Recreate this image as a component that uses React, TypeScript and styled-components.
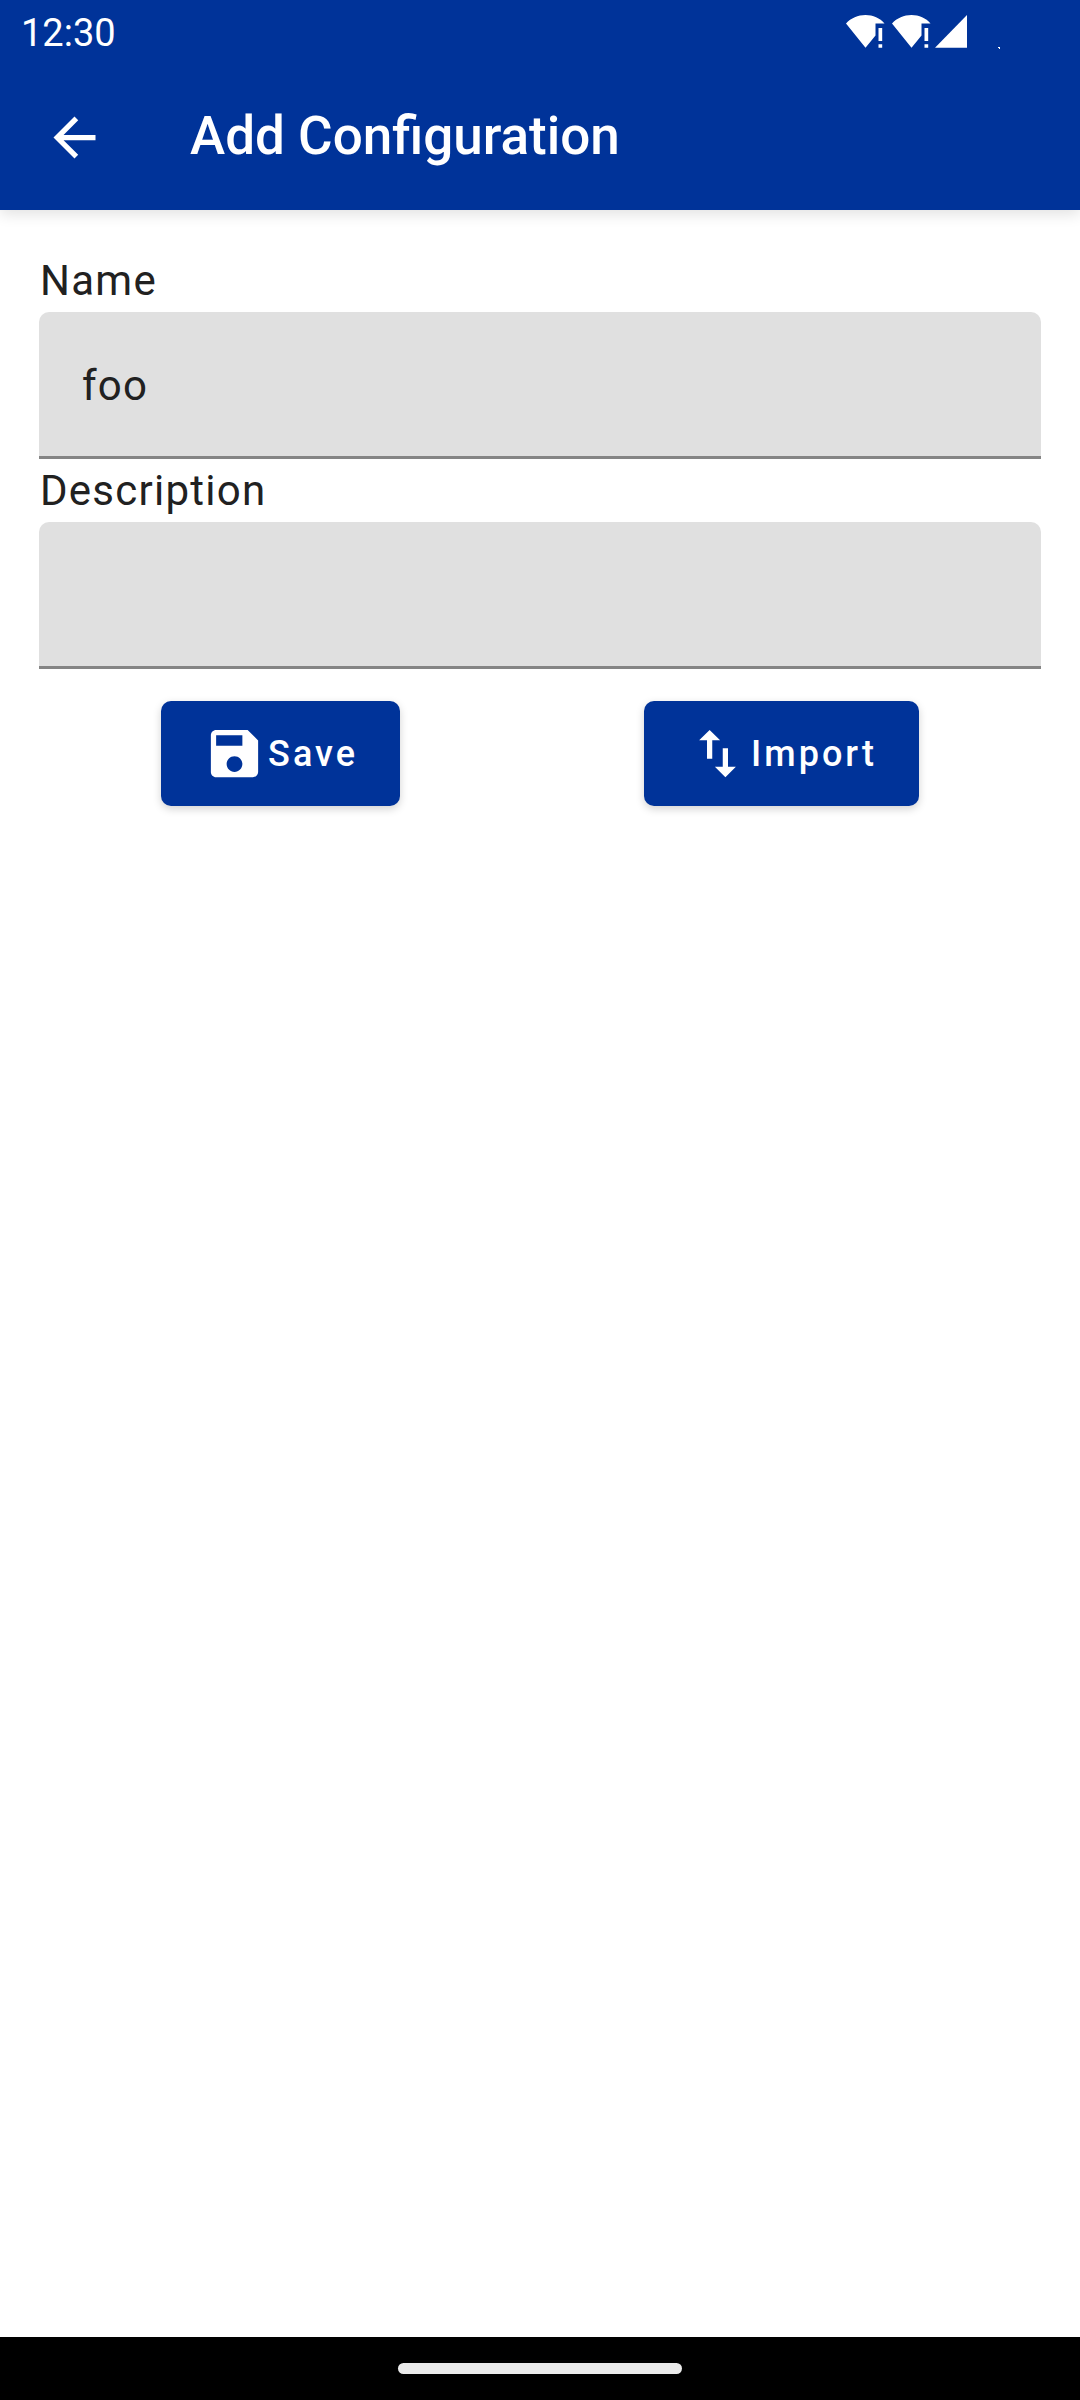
import React, { useState } from "react";
import styled, { createGlobalStyle } from "styled-components";

const GlobalStyle = createGlobalStyle`
  *, *::before, *::after { box-sizing: border-box; }
  body {
    margin: 0;
    background: #ffffff;
    color: #212121;
    font-family: Roboto, "Liberation Sans", sans-serif;
  }
`;

const Screen = styled.div`
  display: flex;
  flex-direction: column;
  min-height: 100vh;
`;

const Header = styled.header`
  background: #003399;
  color: #ffffff;
  box-shadow: 0 4px 14px rgba(0, 0, 0, 0.12);
`;

const StatusBar = styled.div`
  display: flex;
  align-items: center;
  justify-content: space-between;
  height: 64px;
  padding: 2px 80px 0 21px;
`;

const Clock = styled.time`
  font-size: 38px;
  line-height: 44px;
`;

const StatusIcons = styled.div`
  display: flex;
  align-items: center;
  gap: 7px;
  padding-bottom: 4px;
`;

const StatusGlyph = styled.svg`
  display: block;
  height: 34px;
  overflow: visible;
  fill: #ffffff;
`;

const AppBar = styled.div`
  display: flex;
  align-items: center;
  gap: 72px;
  height: 146px;
  padding: 0 43px;
`;

const BackButton = styled.button`
  display: flex;
  padding: 0;
  border: 0;
  background: none;
  color: inherit;
  cursor: pointer;
`;

const Title = styled.h1`
  margin: 0;
  padding: 0 0 2px 12px;
  font-size: 53px;
  font-weight: 500;
  line-height: 62px;
`;

const Icon = styled.svg`
  display: block;
  flex: none;
  width: 63px;
  height: 63px;
  fill: currentColor;
`;

const Form = styled.form`
  flex: 1;
  display: flex;
  flex-direction: column;
  padding: 39px;
`;

const Field = styled.div`
  display: flex;
  flex-direction: column;
`;

const Label = styled.label`
  padding-left: 1px;
  font-size: 42px;
  line-height: 63px;
  letter-spacing: 0.03em;
`;

const TextInput = styled.input`
  width: 100%;
  height: 147px;
  padding: 2px 43px 0;
  border: 0;
  border-bottom: 3px solid #858585;
  border-radius: 10px 10px 0 0;
  outline: none;
  background: #e0e0e0;
  color: #212121;
  font: inherit;
  font-size: 42px;
  letter-spacing: 0.03em;
`;

const Actions = styled.div`
  display: flex;
  justify-content: space-around;
  padding-top: 32px;
`;

const ActionButton = styled.button`
  display: flex;
  align-items: center;
  gap: 2px;
  height: 105px;
  padding: 0 42px;
  border: 0;
  border-radius: 10px;
  background: #003399;
  color: #ffffff;
  box-shadow: 0 3px 8px rgba(0, 0, 0, 0.18);
  font: inherit;
  font-size: 36px;
  font-weight: 500;
  letter-spacing: 3px;
  cursor: pointer;
`;

const NavBar = styled.footer`
  display: flex;
  align-items: center;
  justify-content: center;
  height: 63px;
  background: #000000;
`;

const HomeHandle = styled.div`
  width: 284px;
  height: 11px;
  border-radius: 6px;
  background: #ebebeb;
`;

const WifiAlert = () => (
  <StatusGlyph width="39" viewBox="0 0 39 34" aria-hidden="true">
    <path d="M0 9.5C5 4 12 1 19.5 1S34 4 38.500 9.500H29.500V21.500L19.500 33.700Z" />
    <path d="M32.500 14H36.200V27H32.500ZM32.500 30.300H36.200V33.700H32.500Z" />
  </StatusGlyph>
);

export default function App() {
  const [name, setName] = useState("foo");
  const [description, setDescription] = useState("");

  return (
    <Screen>
      <GlobalStyle />
      <Header>
        <StatusBar>
          <Clock>12:30</Clock>
          <StatusIcons>
            <WifiAlert />
            <WifiAlert />
            <StatusGlyph width="62" viewBox="0 0 62 34" aria-hidden="true">
              <path d="M-3 33.700L29 1V33.700Z" />
              <path d="M60 33H62V35H61V34H60Z" />
            </StatusGlyph>
          </StatusIcons>
        </StatusBar>
        <AppBar>
          <BackButton type="button" aria-label="Back">
            <Icon viewBox="0 0 24 24" aria-hidden="true">
              <path d="M20 11H7.830l5.590-5.590L12 4l-8 8 8 8 1.410-1.410L7.830 13H20v-2z" />
            </Icon>
          </BackButton>
          <Title>Add Configuration</Title>
        </AppBar>
      </Header>
      <Form onSubmit={(event: React.FormEvent) => event.preventDefault()}>
        <Field>
          <Label htmlFor="name">Name</Label>
          <TextInput
            id="name"
            type="text"
            value={name}
            onChange={(event) => setName(event.target.value)}
          />
        </Field>
        <Field>
          <Label htmlFor="description">Description</Label>
          <TextInput
            id="description"
            type="text"
            value={description}
            onChange={(event) => setDescription(event.target.value)}
          />
        </Field>
        <Actions>
          <ActionButton type="submit">
            <Icon viewBox="0 0 24 24" aria-hidden="true">
              <path d="M17 3H5c-1.110 0-2 .9-2 2v14c0 1.100.89 2 2 2h14c1.100 0 2-.9 2-2V7l-4-4zm-5 16c-1.660 0-3-1.340-3-3s1.340-3 3-3 3 1.340 3 3-1.340 3-3 3zm3-10H5V5h10v4z" />
            </Icon>
            Save
          </ActionButton>
          <ActionButton type="button">
            <Icon viewBox="0 0 24 24" aria-hidden="true">
              <path d="M16 17.010V10h-2v7.010h-3L15 21l4-3.990h-3zM9 3L5 6.990h3V14h2V6.990h3L9 3z" />
            </Icon>
            Import
          </ActionButton>
        </Actions>
      </Form>
      <NavBar>
        <HomeHandle />
      </NavBar>
    </Screen>
  );
}
